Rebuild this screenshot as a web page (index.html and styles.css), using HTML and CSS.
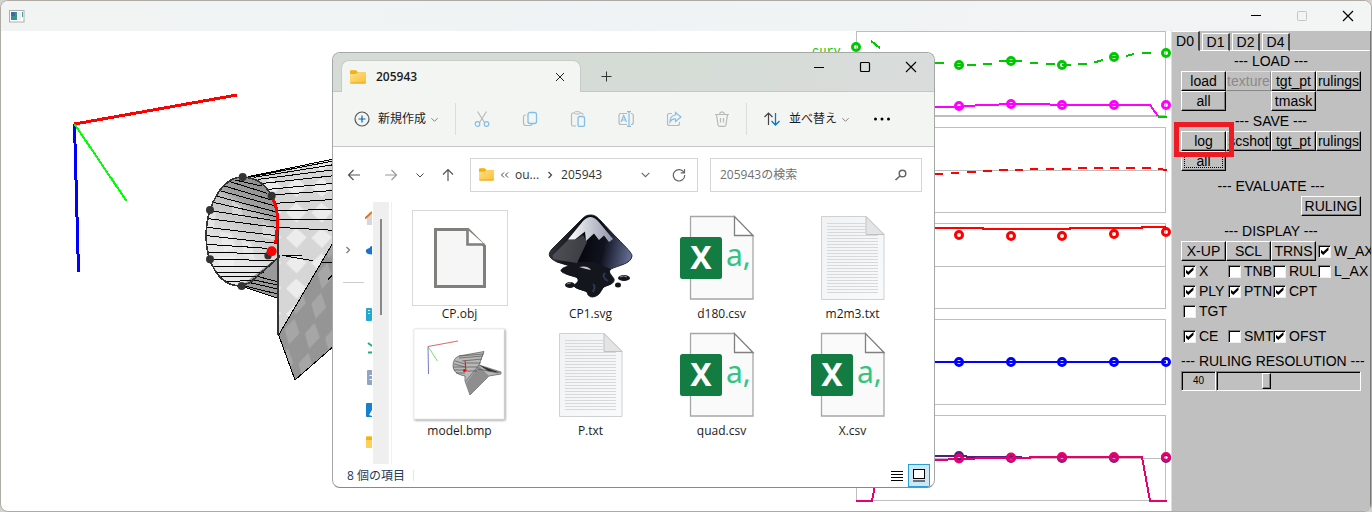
FILE: index.html
```html
<!DOCTYPE html>
<html lang="ja">
<head>
<meta charset="utf-8">
<title>Ruling editor</title>
<link rel="stylesheet" href="styles.css">
</head>
<body>
<svg class="defs" aria-hidden="true">
  <defs>
    <linearGradient id="folderFill" x1="0" y1="0" x2="1" y2="1"><stop offset="0" stop-color="#ffe08a"/><stop offset="1" stop-color="#fcc02e"/></linearGradient>
    <linearGradient id="paper" x1="0" y1="0" x2="1" y2="1"><stop offset="0" stop-color="#f1f2f3"/><stop offset="1" stop-color="#f8fafb"/></linearGradient>
    <symbol id="folder" viewBox="0 0 16 14"><path d="M0 3V1.500Q0 .5 1 .5h5l2 2h7q1 0 1 1V5H0z" fill="#f0a808"/><rect y="2.500" width="16" height="11" rx="1" fill="url(#folderFill)"/><path d="M.5 13h15" stroke="#e2a424"/><path d="M0 3V1.500Q0 .5 1 .5h5l1.500 1.500L6 4H0z" fill="#f4b20c"/></symbol>
    <symbol id="chev" viewBox="0 0 10 10"><path d="M1.500 3.500 5 7l3.500-3.500" fill="none" stroke="currentColor"/></symbol>
    <symbol id="csv" viewBox="0 0 96 96">
      <path d="M16.500 6.500H60L79 25.500V89H16.500z" fill="#fafafa" stroke="#a6a6a6" stroke-width="1.300"/>
      <path d="M60.500 6.500V25.500H79z" fill="#fff" stroke="#808080" stroke-width="1.300"/>
      <rect x="6" y="27" width="42" height="42" rx="2.500" fill="#127c42"/>
      <text x="27" y="59" text-anchor="middle" class="glyph-x">X</text>
      <text x="52" y="56" class="glyph-a">a,</text>
    </symbol>
    <symbol id="txt" viewBox="0 0 96 96">
      <path d="M16.500 6.500H61L79 24.500V89.500H16.500z" fill="url(#paper)" stroke="#cfd1d3"/>
      <path d="M22 13.500H60M22 16.500H60M22 19.500H60M22 22.500H60M22 25.500H73M22 28.500H73M22 31.500H73M22 34.500H73M22 37.500H73M22 40.500H73M22 43.500H73M22 46.500H73M22 49.500H73M22 52.500H73M22 55.500H73M22 58.500H73M22 61.500H73M22 64.500H73M22 67.500H73M22 70.500H73M22 73.500H73M22 76.500H73M22 79.500H73M22 82.500H73" stroke="#d6d8da"/>
      <path d="M61 6.500V24.500H79z" fill="#e4e4e4" stroke="#bfc1c3"/>
    </symbol>
  </defs>
</svg>

<div class="app">
  <header class="titlebar">
    <svg class="app-icon" width="16" height="13" viewBox="0 0 16 13" aria-hidden="true"><rect x=".5" y=".5" width="14.500" height="11.500" fill="#fff" stroke="#aab0b2"/><rect x="2" y="2" width="6" height="8" fill="#3e8f90"/><rect x="2" y="2" width="4" height="4" fill="#3a6fa0"/><rect x="9" y="2" width="3" height="8" fill="#edf0ef"/><rect x="13" y="2" width="1" height="5" fill="#4a9a90"/></svg>
    <div class="window-buttons">
      <button type="button" aria-label="Minimize"><svg width="12" height="12"><path d="M1 5.500H11" stroke="#000"/></svg></button>
      <button type="button" aria-label="Maximize" disabled><svg width="12" height="12"><rect x="1.500" y="1.500" width="9" height="9" rx="1" fill="none" stroke="#c4c4c4"/></svg></button>
      <button type="button" aria-label="Close"><svg width="12" height="12"><path d="M1 1 11 11M11 1 1 11" stroke="#000" stroke-width="1.200"/></svg></button>
    </div>
  </header>

  <div class="workspace">
    <main class="canvas">
      <svg class="model" width="336" height="480" viewBox="0 31 336 480" role="img" aria-label="3D model view">
        <defs>
          <pattern id="chkLight" width="76" height="76" patternUnits="userSpaceOnUse" patternTransform="translate(318 180)"><rect width="76" height="76" fill="#d6d6d6"/><path d="M0 38 30 8 62 36 32 68z" fill="#ececec"/></pattern>
          <pattern id="chkDark" width="62" height="92" patternUnits="userSpaceOnUse" patternTransform="translate(318 530) rotate(12)"><rect width="62" height="92" fill="#959595"/><path d="M4 38 26 0 50 40 26 80z" fill="#a6a6a6"/></pattern>
          <linearGradient id="inside" x1=".7" y1="0" x2=".4" y2=".75"><stop offset="0" stop-color="#8c8c8c"/><stop offset=".33" stop-color="#a0a0a0"/><stop offset=".4" stop-color="#bdbdbd"/><stop offset=".75" stop-color="#d8d8d8"/><stop offset="1" stop-color="#e8e8e8"/></linearGradient>
        </defs>
        <g fill="none" stroke-width="3" shape-rendering="crispEdges">
          <path d="M74.500 124 78.500 272" stroke="#00f"/>
          <path d="M74.500 124 237 95" stroke="red"/>
          <path d="M74.500 124 126.500 201" stroke="#0f0" stroke-width="2"/>
        </g>
        <svg x="180" y="140" width="160" height="250" viewBox="0 0 480 750">
          <path d="M188 111 480 54V310L440 340 296 585 293 345 293 215 275 167Q245 112 188 111z" fill="url(#chkLight)"/>
          <path d="M188 111Q245 112 275 167 292 215 293 262V352L200 436 183 438C115 438 78 365 78 285 80 190 130 111 188 111z" fill="url(#inside)"/>
          <g fill="#fff" opacity=".35"><path d="M120 275 155 280 168 325 132 335zM185 300 215 310 225 360 190 345zM248 245 285 270 280 300 245 290zM155 180 182 200 190 235 158 225zM110 350 165 350 160 385 120 380zM82 210 108 220 100 270 82 260z"/></g>
          <path d="M183 438 293 352V475z" fill="#999"/>
          <path d="M480 272 296 585 345 720 480 602z" fill="url(#chkDark)"/>
          <g fill="none" stroke="#000" stroke-width="3" shape-rendering="crispEdges">
            <path d="M165 120 245 138M150 125 262 160M133 138 275 180M120 152 282 197M108 168 285 215M100 187 288 230M92 212 290 243M86 236 290 262M82 262 290 287M80 287 290 310M82 313 262 325M84 336 258 342M92 357 285 362M100 378 270 378M110 397 252 396M122 411 240 408M140 424 222 422"/>
            <path d="M205 110 480 53M205 112 480 59M222 112 480 71M235 118 480 87M250 130 480 105M265 148 480 128M275 165 480 150M285 190 480 177M293 212 480 208M293 238 480 240M293 262 480 272M305 346 365 346M305 346 398 362"/>
            <path d="M235 410 293 425M222 420 293 435M210 428 293 447M195 438 293 462M190 440 293 475M426 367H480M444 418 480 382"/>
            <path d="M480 272 296 585 345 720 480 602"/>
          </g>
          <g fill="none" stroke="#333" stroke-width="5" shape-rendering="crispEdges">
            <path d="M275 167Q245 112 188 111C130 111 80 190 78 285 78 365 115 438 183 438L210 428 300 348M294 262V585"/>
          </g>
          <path d="M277 172Q294 205 293 250L287 310" fill="none" stroke="red" stroke-width="9" shape-rendering="crispEdges"/>
          <g fill="#333"><circle cx="188" cy="111" r="12"/><circle cx="275" cy="167" r="12"/><circle cx="90" cy="210" r="12"/><circle cx="90" cy="358" r="12"/><circle cx="185" cy="438" r="12"/><circle cx="264" cy="347" r="11"/></g>
          <circle cx="275" cy="334" r="15" fill="red"/>
        </svg>
      </svg>

      <svg class="charts" width="365" height="480" viewBox="806 31 365 480" role="img" aria-label="Curve charts">
        <text x="812" y="55" class="curve-label">curv</text>
        <g fill="none" stroke="#bebebe" shape-rendering="crispEdges">
          <path d="M856.500 31.500H1165.500V116.500H856.500zM856.500 115.500H1166M856.500 127.500H1165.500V212.500H856.500zM856.500 170.500H1166M856.500 223.500H1165.500V308.500H856.500zM856.500 266.500H1166M856.500 319.500H1165.500V404.500H856.500zM856.500 362.500H1166M856.500 415.500H1165.500V500.500H856.500zM856.500 458.500H1166"/>
        </g>
        <g fill="none" stroke-width="2" shape-rendering="crispEdges">
          <path stroke="#00c800" d="M871 41 880 48M935 63H944M955 65H963M967 65H976M983 64H992M999 61.500 1011 61H1022M1030 63H1038M1046 64H1055M1062 65H1071M1078 64H1087M1094 62.500 1103 60M1110 58 1118 56M1126 56 1134 54M1142 53H1151M1158 117H1167"/>
          <path stroke="#f0f" d="M935 107H959L975 105.500 1011 104H1037L1062 105H1150L1158 116"/>
          <path stroke="red" d="M935 174H943M951 173H959M967 172H976M983 171H992M999 170H1008M1015 170H1023M1030 169H1038M1046 169H1054M1062 169H1071M1078 168H1087M1094 168H1103M1110 168H1119M1126 168H1135M1142 168H1151M1158 169 1167 170"/>
          <path stroke="red" d="M935 228H983V229H1070V228H1142V227H1166"/>
          <path stroke="#00f" d="M935 362H1166"/>
          <path stroke="#502080" d="M935 456H966L967 457H1022"/>
          <path stroke="#e60070" d="M935 460 975 458.500 1030 458V457H1142L1150 501H1167M856 501H872L876 480"/>
        </g>
        <g fill="none" stroke-width="3">
          <g stroke="#00c800"><circle cx="856" cy="47" r="3.500"/><circle cx="959" cy="65" r="3.500"/><circle cx="1011" cy="61" r="3.500"/><circle cx="1062" cy="65" r="3.500"/><circle cx="1114" cy="57" r="3.500"/><circle cx="1166" cy="53" r="3.500"/></g>
          <g stroke="#f0f"><circle cx="959" cy="106" r="3.500"/><circle cx="1011" cy="104" r="3.500"/><circle cx="1062" cy="105" r="3.500"/><circle cx="1114" cy="105" r="3.500"/><circle cx="1166" cy="105" r="3.500"/></g>
          <g stroke="red"><circle cx="959" cy="235" r="3.500"/><circle cx="1011" cy="236" r="3.500"/><circle cx="1062" cy="236" r="3.500"/><circle cx="1114" cy="234" r="3.500"/><circle cx="1166" cy="232" r="3.500"/></g>
          <g stroke="#00f"><circle cx="959" cy="362" r="3.500"/><circle cx="1011" cy="362" r="3.500"/><circle cx="1062" cy="362" r="3.500"/><circle cx="1114" cy="362" r="3.500"/><circle cx="1166" cy="362" r="3.500"/></g>
          <g stroke="#502080"><circle cx="959" cy="456" r="3.500"/><circle cx="1011" cy="458" r="3.500"/><circle cx="1062" cy="458" r="3.500"/><circle cx="1114" cy="458" r="3.500"/><circle cx="1166" cy="458" r="3.500"/></g>
          <g stroke="#e60070"><circle cx="959" cy="458.500" r="3.500"/><circle cx="1011" cy="457.500" r="3.500"/><circle cx="1062" cy="457" r="3.500"/><circle cx="1114" cy="457" r="3.500"/><circle cx="1166" cy="457" r="3.500"/></g>
        </g>
      </svg>
    </main>

    <aside class="panel">
      <nav class="tabs">
        <button type="button" class="tab current">D0</button><button type="button" class="tab">D1</button><button type="button" class="tab">D2</button><button type="button" class="tab">D4</button>
      </nav>
      <div class="panel-body">
        <section class="group">
          <h2>--- LOAD ---</h2>
          <div class="cells">
            <button type="button" class="btn">load</button><button type="button" class="btn" disabled>texture</button><button type="button" class="btn">tgt_pt</button><button type="button" class="btn">rulings</button>
            <button type="button" class="btn">all</button><button type="button" class="btn third">tmask</button>
          </div>
        </section>
        <section class="group spaced">
          <h2>--- SAVE ---</h2>
          <div class="cells">
            <div class="marked"><button type="button" class="btn">log</button></div><button type="button" class="btn">scshot</button><button type="button" class="btn">tgt_pt</button><button type="button" class="btn">rulings</button>
            <button type="button" class="btn focused">all</button>
          </div>
        </section>
        <section class="group spaced">
          <h2>--- EVALUATE ---</h2>
          <div class="right"><button type="button" class="btn wide">RULING</button></div>
        </section>
        <section class="group">
          <h2>--- DISPLAY ---</h2>
          <div class="cells">
            <button type="button" class="btn">X-UP</button><button type="button" class="btn">SCL</button><button type="button" class="btn">TRNS</button><label><input type="checkbox" checked>W_AX</label>
            <label><input type="checkbox" checked>X</label><label><input type="checkbox">TNB</label><label><input type="checkbox">RUL</label><label><input type="checkbox">L_AX</label>
            <label><input type="checkbox" checked>PLY</label><label><input type="checkbox" checked>PTN</label><label class="row-end"><input type="checkbox" checked>CPT</label>
            <label class="row-end first"><input type="checkbox">TGT</label>
          </div>
          <div class="cells gap-above">
            <label><input type="checkbox" checked>CE</label><label><input type="checkbox">SMT</label><label><input type="checkbox" checked>OFST</label>
          </div>
        </section>
        <section class="group">
          <h2><label for="resolution">--- RULING RESOLUTION ---</label></h2>
          <div class="slider"><output for="resolution">40</output><input id="resolution" type="range" min="10" max="100" value="40"></div>
        </section>
      </div>
    </aside>
  </div>
</div>

<div class="explorer">
  <div class="ex-tabs">
    <div class="ex-tab"><svg width="16" height="14"><use href="#folder"/></svg><span>205943</span><button type="button" aria-label="タブを閉じる"><svg width="10" height="10"><path d="M1 1 9 9M9 1 1 9" stroke="#222"/></svg></button></div>
    <button type="button" class="new-tab" aria-label="新しいタブ"><svg width="11" height="11"><path d="M.5 5.500H10.500M5.500 .5V10.500" stroke="#333"/></svg></button>
    <div class="ex-caption">
      <button type="button" aria-label="最小化"><svg width="12" height="12"><path d="M1 6.500H11" stroke="#000"/></svg></button>
      <button type="button" aria-label="最大化"><svg width="12" height="12"><rect x="1.500" y="1.500" width="9" height="9" rx="1" fill="none" stroke="#000" stroke-width="1.200"/></svg></button>
      <button type="button" aria-label="閉じる"><svg width="12" height="12"><path d="M1 1 11 11M11 1 1 11" stroke="#000" stroke-width="1.100"/></svg></button>
    </div>
  </div>

  <div class="toolbar">
    <button type="button" class="tool-text"><svg width="16" height="16" fill="none"><circle cx="8" cy="8" r="7" stroke="#555" stroke-width="1.200"/><path d="M4.500 8h7M8 4.500v7" stroke="#0067b8" stroke-width="1.200"/></svg><span>新規作成</span><svg class="chev" width="9" height="9"><use href="#chev"/></svg></button>
    <i class="sep"></i>
    <div class="tools">
      <button type="button" aria-label="切り取り"><svg width="16" height="16" fill="none"><path d="M3.500.5 10.500 11.500M12.500.5 5.500 11.500" stroke="#b8bab8" stroke-width="1.200"/><circle cx="3.500" cy="13" r="2.300" stroke="#84bfe6" stroke-width="1.200"/><circle cx="12.500" cy="13" r="2.300" stroke="#84bfe6" stroke-width="1.200"/></svg></button>
      <button type="button" aria-label="コピー"><svg width="16" height="16" fill="none"><path d="M4 4H3Q1.500 4 1.500 6v6q0 2.500 2.500 2.500h4.500q1.500 0 1.500-1.500" stroke="#b8bab8" stroke-width="1.200"/><rect x="6" y="1.500" width="8.500" height="11" rx="2" stroke="#84bfe6" stroke-width="1.300"/></svg></button>
      <button type="button" aria-label="貼り付け"><svg width="16" height="16" fill="none"><path d="M6 15H3Q1.500 15 1.500 13V3.500Q1.500 2 3 2h1.500M10 2h1.500Q13 2 13 4" stroke="#b8bab8" stroke-width="1.200"/><rect x="4.500" y=".7" width="5.500" height="2.300" rx="1" stroke="#b8bab8"/><rect x="8" y="5.500" width="6.500" height="10" rx="1.500" stroke="#84bfe6" stroke-width="1.300"/></svg></button>
      <button type="button" aria-label="名前の変更"><svg width="16" height="16" fill="none"><path d="M9 2.500H3q-2 0-2 2v7q0 2 2 2h6M13 2.500q2.300 0 2.300 2v7q0 2-2.300 2" stroke="#b8bab8" stroke-width="1.200"/><path d="M9 .7h4M9 15.300h4M11 .7v14.600M3 11 5.700 4.500 8.500 11M4 9h3.500" stroke="#84bfe6" stroke-width="1.200"/></svg></button>
      <button type="button" aria-label="共有"><svg width="16" height="16" fill="none"><path d="M6 2.500H3.500q-2 0-2 2v8q0 2 2 2h8q2 0 2-2V11" stroke="#b8bab8" stroke-width="1.200"/><path d="M9.500 1.500 15 6 9.500 10.500V8Q6 7.500 4 11 4 4.500 9.500 4z" stroke="#84bfe6" stroke-width="1.200"/></svg></button>
      <button type="button" aria-label="削除"><svg width="16" height="16" fill="none"><path d="M1 3.500H15M5.500 3Q6 .8 8 .8T10.500 3M2.500 3.500 4 14q.2 1.300 1.500 1.300h5q1.300 0 1.500-1.300L13.500 3.500M6.500 7v4.500M9.500 7v4.500" stroke="#b8bab8" stroke-width="1.200"/></svg></button>
    </div>
    <i class="sep"></i>
    <button type="button" class="tool-text sort"><svg width="18" height="16" fill="none"><path d="M5.500 14V2M1.500 6l4-4 4 4" stroke="#444" stroke-width="1.200"/><path d="M12.500 2v12M8.500 10l4 4 4-4" stroke="#0078d4" stroke-width="1.300"/></svg><span>並べ替え</span><svg class="chev" width="9" height="9"><use href="#chev"/></svg></button>
    <button type="button" class="more" aria-label="もっと見る"><svg width="18" height="4"><circle cx="2.500" cy="2" r="1.500"/><circle cx="9" cy="2" r="1.500"/><circle cx="15.500" cy="2" r="1.500"/></svg></button>
  </div>

  <div class="navbar">
    <div class="history">
      <button type="button" aria-label="戻る"><svg width="14" height="14" fill="none"><path d="M13 7H1.500M6.500 2l-5 5 5 5" stroke="#555" stroke-width="1.200"/></svg></button>
      <button type="button" aria-label="進む"><svg width="14" height="14" fill="none"><path d="M1 7H12.500M7.500 2l5 5-5 5" stroke="#999" stroke-width="1.200"/></svg></button>
      <button type="button" aria-label="履歴"><svg width="10" height="10"><use href="#chev"/></svg></button>
      <button type="button" aria-label="上へ"><svg width="14" height="14" fill="none"><path d="M7 13V1.500M2 6.500l5-5 5 5" stroke="#555" stroke-width="1.200"/></svg></button>
    </div>
    <div class="address"><svg width="15" height="13"><use href="#folder"/></svg><svg width="9" height="8" fill="none"><path d="M4 1.500 1.500 4 4 6.500M8 1.500 5.500 4 8 6.500" stroke="#444"/></svg><span>ou...</span><svg class="crumb" width="6" height="8" fill="none"><path d="M1.500 1 4.500 4l-3 3" stroke="#444" stroke-width="1.200"/></svg><span>205943</span>
      <button type="button" class="push" aria-label="以前の場所"><svg width="11" height="11"><use href="#chev"/></svg></button><button type="button" aria-label="更新"><svg width="14" height="14" fill="none"><path d="M12 4.500A5.700 5.700 0 1 0 12.700 7M12.500 1v3.800H8.700" stroke="#666" stroke-width="1.200"/></svg></button></div>
    <label class="search"><input type="text" placeholder="205943の検索" aria-label="205943の検索"><svg width="14" height="12" fill="none"><circle cx="8.500" cy="4.500" r="3.300" stroke="#666" stroke-width="1.500"/><path d="M6 7 1.500 11" stroke="#666" stroke-width="1.600"/></svg></label>
  </div>

  <div class="ex-body">
    <div class="places">
      <div class="place"><svg width="7" height="16"><path d="M1 8 7 3V15H2V8z" fill="#d5d7d8"/><path d="M0 8.500 7 2" stroke="#e07020" stroke-width="2"/></svg></div>
      <div class="place"><svg class="expand" width="6" height="8" fill="none"><path d="M1.500 1 4.500 4l-3 3" stroke="#777" stroke-width="1.200"/></svg><svg width="7" height="16"><path d="M7 4Q5 4 4.500 6 0 7 1 10q1 2.500 6 2.500z" fill="#1573d1"/></svg></div>
      <div class="place rule"></div>
      <div class="place"><svg width="7" height="16"><rect x="1" y="2" width="6" height="13" rx="1" fill="#22a9cf"/><path d="M3 4.500h2M3 7.500h2" stroke="#fff"/></svg></div>
      <div class="place"><svg width="7" height="16" fill="none"><path d="M3 5 7 8M3 14.500H7" stroke="#1eae7c" stroke-width="2"/></svg></div>
      <div class="place"><svg width="7" height="16"><rect x="2" width="6" height="15" rx="1" fill="#8fa5c1"/><path d="M4.500 5.500H7M4.500 9.500H7" stroke="#fff"/></svg></div>
      <div class="place"><svg width="7" height="16"><rect x="1" y="1" width="7" height="14" rx="1" fill="#1480d0"/><path d="M4 13 7 8v6z" fill="#fff"/></svg></div>
      <div class="place"><svg width="7" height="16"><rect x="1" y="2" width="7" height="12" rx="1" fill="#fcd05a"/><path d="M1 3h6v3H1z" fill="#f4b20c"/></svg></div>
    </div>
    <div class="scroll"><i></i></div>
    <div class="files">
      <a class="file selected" href="#"><svg width="96" height="96" fill="none"><path d="M23.500 19.500H56L72.500 36V76.500H23.500z" fill="#f6f6f6" stroke="#807f7b" stroke-width="3"/><path d="M55.500 19.500V34.500H72.500" fill="#fff" stroke="#807f7b" stroke-width="2.600"/></svg><span>CP.obj</span></a>
      <a class="file" href="#"><svg width="96" height="96">
        <defs><linearGradient id="ink" x1="0" y1=".3" x2="1" y2=".5"><stop offset="0" stop-color="#33353b"/><stop offset=".4" stop-color="#07080f"/><stop offset=".65" stop-color="#10131f"/><stop offset="1" stop-color="#69739c"/></linearGradient><linearGradient id="snow" x1="0" y1="0" x2="1" y2="0"><stop offset="0" stop-color="#fff"/><stop offset="1" stop-color="#8f94a8"/></linearGradient></defs>
        <path d="M47.500 5C43 5 41 7 38 10L9 39C4 45 6 48 14 52L27 56C20 57 16 60 19 62 25 66 34 66 35 69 37 72 31 74 31 76 32 79 42 80 44 82 45 87 49 88 53 86 58 84 57 80 61 77 66 74 72 74 71 69 69 65 64 62 68 59 76 55 88 54 89 46 89 42 80 35 58 11 54 7 52 5 47.500 5z" fill="url(#ink)" stroke="#22242c"/>
        <path d="M14 52 27 56Q20 57 18 61 25 66 34 67 37 72 31 76 33 79 44 82 46 88 53 86 57 84 61 77 72 74 71 69 64 62 68 59L50 52z" fill="#14161d"/>
        <path d="M47.500 7Q44 7 40 11L25 29.500H32L42 21.500 43 31 51 23.500 56 30 61 25.500 66 32 70 29 55 11Q51 7 47.500 7z" fill="url(#snow)"/>
        <path d="M25 30 10 45Q8 49 15 50L34 53 44 32 40 25 32 30z" fill="#6b6d72" opacity=".55"/>
        <path d="M36 57q9-2 12 3l-5-1z" fill="#c5c8ce"/><path d="M50 74q3 2 0 8M62 63q-4 4 3 8" fill="none" stroke="#2c3850" stroke-width="2"/>
        <ellipse cx="27" cy="75" rx="5" ry="3" fill="#14161b"/><ellipse cx="81" cy="68" rx="6" ry="3" fill="#14161b"/><ellipse cx="75" cy="75" rx="3" ry="2.500" fill="#14161b"/><path d="M77 67q4-2 7 0M24 74q2-1 4-1" fill="none" stroke="#8a909c"/>
      </svg><span>CP1.svg</span></a>
      <a class="file" href="#"><svg width="96" height="96"><use href="#csv"/></svg><span>d180.csv</span></a>
      <a class="file" href="#"><svg width="96" height="96"><use href="#txt"/></svg><span>m2m3.txt</span></a>
      <a class="file" href="#"><svg class="thumb" width="96" height="96" fill="none"><rect x="2" y="2" width="90" height="90" fill="#fff" stroke="#eee"/>
        <path d="M16 19.500 46 14" stroke="#d66"/><path d="M16 19.500 25.500 34" stroke="#7d7"/><path d="M16 19.500 16.500 47" stroke="#77c"/>
        <path d="M47 29 72 24.500 67 38 89 45 89 47 77 49 58 68 53 54 53 49Q41 47 41 39T47 29z" fill="#b8b8b8" stroke="#555" stroke-width=".7"/>
        <path d="M67 38 89 46 76 44z" fill="#333"/><path d="M67 39 77 49 58 68 54 56z" fill="#8e8e8e"/><path d="M47 29 72 27M47 31 71 29M50 34 70 32M43 34l10 3M42 37l11 3M41 40h12M42 43h11M44 46h9M54 36h15M54 40h12M54 44h11M66 42l20 4M54 54 67 38" stroke="#444" stroke-width=".6"/><path d="M53 33.500 54 44" stroke="red"/><circle cx="52.500" cy="43.500" r="1.500" fill="red"/></svg><span>model.bmp</span></a>
      <a class="file" href="#"><svg width="96" height="96"><use href="#txt"/></svg><span>P.txt</span></a>
      <a class="file" href="#"><svg width="96" height="96"><use href="#csv"/></svg><span>quad.csv</span></a>
      <a class="file" href="#"><svg width="96" height="96"><use href="#csv"/></svg><span>X.csv</span></a>
    </div>
  </div>

  <footer class="status"><span>8 個の項目</span><i></i>
    <button type="button" aria-label="詳細表示"><svg width="12" height="12"><path d="M0 1.500H12M0 4.500H12M0 7.500H12M0 10.500H12" stroke="#000"/></svg></button>
    <button type="button" class="active" aria-label="大アイコン"><svg width="12" height="13"><rect x=".5" y=".5" width="11" height="9" fill="#fff" stroke="#000"/><path d="M0 12H12" stroke="#000"/></svg></button>
  </footer>
</div>
</body>
</html>
```

FILE: styles.css
```css
* { box-sizing: border-box; }
body {
  margin: 0;
  background: #d4d2ce;
  font-family: "Liberation Sans", Arial, "Noto Sans CJK JP", sans-serif;
  font-size: 14px;
  color: #000;
}
button { font: inherit; color: inherit; padding: 0; border: 0; background: none; }
svg { display: block; flex: none; }
.defs { position: absolute; width: 0; height: 0; }

.app {
  display: flex;
  flex-direction: column;
  min-height: 100vh;
  border: 1px solid #aeaba6;
  border-radius: 8px;
  overflow: hidden;
  background: #fff;
}
.titlebar {
  display: flex;
  justify-content: space-between;
  align-items: center;
  height: 30px;
  padding-left: 8px;
  background: linear-gradient(90deg, #f1f4f2, #eff3f5 40%, #f3f4f4);
}
.window-buttons { display: flex; }
.window-buttons button { display: grid; place-items: center; width: 46px; height: 28px; }
.workspace { display: flex; flex: 1; }
.canvas { display: flex; flex: 1; justify-content: space-between; min-width: 0; margin-left: -1px; }
.curve-label { font: 12px "Liberation Mono", monospace; fill: #0c0; }

.panel { width: 200px; background: #c0c0c0; border-left: 1px solid #ddd; border-right: 1px solid #777; }
.tabs { display: flex; align-items: flex-end; gap: 2px; height: 20px; box-shadow: inset 0 -1px #fff; }
.tab { width: 28px; height: 18px; border: 1px solid #fff; border-right: 2px solid #444; border-bottom-color: #fff; }
.tab.current { height: 20px; border-bottom-color: #c0c0c0; border-left: 0; }
.panel-body { display: flex; flex-direction: column; gap: 5px; padding-left: 9px; width: 189px; }
.group h2 { margin: 0; font-size: 14px; font-weight: 400; line-height: 20px; text-align: center; white-space: nowrap; }
.group h2 label { display: block; }
.group.spaced { margin-top: -5px; }
.group.spaced + .group.spaced { margin-top: 0; }
.cells { display: grid; grid-template-columns: repeat(4, 45px); grid-auto-rows: 20px; }
.gap-above { margin-top: 5px; }
.btn {
  height: 20px;
  width: 100%;
  line-height: 18px;
  border: 1px solid #fff;
  border-right: 1px solid #000;
  border-bottom: 1px solid #000;
  box-shadow: inset -1px -1px #808080;
  white-space: nowrap;
  display: flex;
  justify-content: center;
  background: #c0c0c0;
}
.btn:disabled { color: #8a8a8a; border-color: #ddd #888 #888 #ddd; box-shadow: none; }
.btn.third { grid-column: 3; }
.btn.wide { width: 60px; }
.btn.focused { outline: 1px dotted #000; outline-offset: -4px; }
.right { display: flex; justify-content: flex-end; }
.marked { position: relative; }
.marked::after { content: ""; position: absolute; inset: -9px -8px -6px -7px; border: 5px solid #ed1c24; z-index: 2; }
.cells label { display: flex; align-items: center; gap: 3px; padding-left: 2px; white-space: nowrap; line-height: 20px; }
.row-end { grid-column-end: span 2; }
.first { grid-column-start: 1; }
input[type="checkbox"] {
  appearance: none;
  display: grid;
  flex: none;
  place-items: center;
  width: 13px;
  height: 13px;
  margin: 0;
  background: #fff;
  border: 1px solid #808080;
  border-right-color: #eee;
  border-bottom-color: #eee;
  box-shadow: inset 1px 1px #000;
}
input[type="checkbox"]:checked::after {
  content: "";
  width: 8px;
  height: 8px;
  background: #000;
  clip-path: polygon(0 30%, 35% 60%, 100% 0, 100% 38%, 35% 100%, 0 68%);
}
.slider { display: flex; }
.slider output, .slider input { height: 20px; margin: 0; border: 1px solid #808080; border-right-color: #fff; border-bottom-color: #fff; box-shadow: inset 1px 1px #000; }
.slider output { width: 35px; font-size: 10px; line-height: 18px; text-align: center; }
.slider input { appearance: none; flex: 1; min-width: 0; padding: 1px; background: #c0c0c0; }
.slider input::-webkit-slider-thumb { appearance: none; width: 9px; height: 16px; background: #c0c0c0; border: 1px solid #fff; border-right-color: #000; border-bottom-color: #000; box-shadow: inset -1px -1px #808080; }

.explorer {
  position: absolute;
  left: 332px;
  top: 52px;
  width: 603px;
  display: flex;
  flex-direction: column;
  border: 1px solid #a5a7a6;
  border-bottom-color: #888;
  border-radius: 8px;
  overflow: hidden;
  background: #fff;
  font-family: "Open Sans", "Noto Sans CJK JP", sans-serif;
  font-size: 12px;
  line-height: 16px;
  color: #1b1b1b;
}
.ex-tabs { display: flex; height: 39px; background: linear-gradient(90deg, #d5dcd5 50%, #d9dcdc); box-shadow: inset 0 -1px #c3c8c4; }
.ex-tab { display: flex; align-items: center; gap: 10px; width: 240px; margin: 7px 0 0 8px; padding: 0 15px 0 8px; background: #f3f5f2; border: 1px solid #c8ccc8; border-bottom: 0; border-radius: 8px 8px 0 0; font-weight: 600; }
.ex-tab button { margin-left: auto; }
.new-tab { width: 50px; padding: 8px 0 0 20px; }
.ex-caption { display: flex; margin-left: auto; }
.ex-caption button { display: grid; place-items: center; width: 46px; height: 28px; }
.toolbar { display: flex; align-items: center; height: 55px; background: #f3f5f3; border-bottom: 1px solid #c6c8c7; padding-left: 21px; }
.tool-text { display: flex; align-items: center; gap: 8px; white-space: nowrap; }
.tool-text .chev { margin-left: -4px; color: #777; }
.sep { width: 1px; height: 32px; background: #ddd; margin-left: 16px; }
.tools { display: flex; gap: 32px; padding-left: 18px; }
.sort { margin-left: 16px; gap: 8px; }
.more { margin-left: 23px; }
.navbar { display: flex; align-items: center; gap: 12px; height: 55px; padding: 0 12px 0 14px; }
.history { display: flex; align-items: center; justify-content: space-between; width: 108px; margin-right: 3px; color: #444; }
.history button:nth-child(2) { margin-left: 7px; }
.address, .search { display: flex; align-items: center; height: 34px; border: 1px solid #d5d5d5; }
.address { flex: 207; padding: 0 11px 0 8px; gap: 6px; color: #333; }
.address .crumb { margin: 0 2px; }
.address .push { margin: 0 15px 0 auto; color: #666; }
.search { flex: 188; padding: 0 13px 0 9px; min-width: 0; }
.search input { flex: 1; min-width: 0; border: 0; padding: 0; font: inherit; outline: 0; }
.search input::placeholder { color: #707070; }
.ex-body { display: flex; }
.places { display: flex; flex-direction: column; width: 39px; }
.place { display: flex; align-items: center; justify-content: flex-end; gap: 15px; height: 32px; }
.place .expand { margin-right: -1px; }
.place.rule::after { content: ""; height: 1px; width: 21px; margin-right: 8px; background: #ccc; }
.scroll { width: 16px; margin-left: 1px; padding: 17px 0 0 7px; background: #efefef; }
.scroll i { display: block; width: 2px; height: 96px; background: #888; }
.files { display: grid; grid-template-columns: repeat(4, 1fr); grid-auto-rows: 117px; flex: 1; margin-left: 2px; border-left: 1px solid #f0f0f0; padding: 8px 16px 20px 2px; }
.file { display: flex; flex-direction: column; align-items: center; color: inherit; text-decoration: none; }
.file.selected svg { box-shadow: inset 0 0 0 1px #d9d9d9; }
.thumb { filter: drop-shadow(1px 1px 1px #999); }
.glyph-x { font: bold 32px "Noto Sans", sans-serif; fill: #fff; }
.glyph-a { font: 30px "Noto Sans", sans-serif; fill: #33c481; }
.status { display: flex; align-items: center; height: 23px; padding: 0 4px 0 14px; color: #1e395b; }
.status i { width: 1px; height: 11px; margin: 0 auto 0 8px; background: #e5e5e5; }
.status button { display: grid; place-items: center; width: 22px; height: 23px; }
.status button.active { border: 1px solid #26a0da; background: #cce8f6; }
```
